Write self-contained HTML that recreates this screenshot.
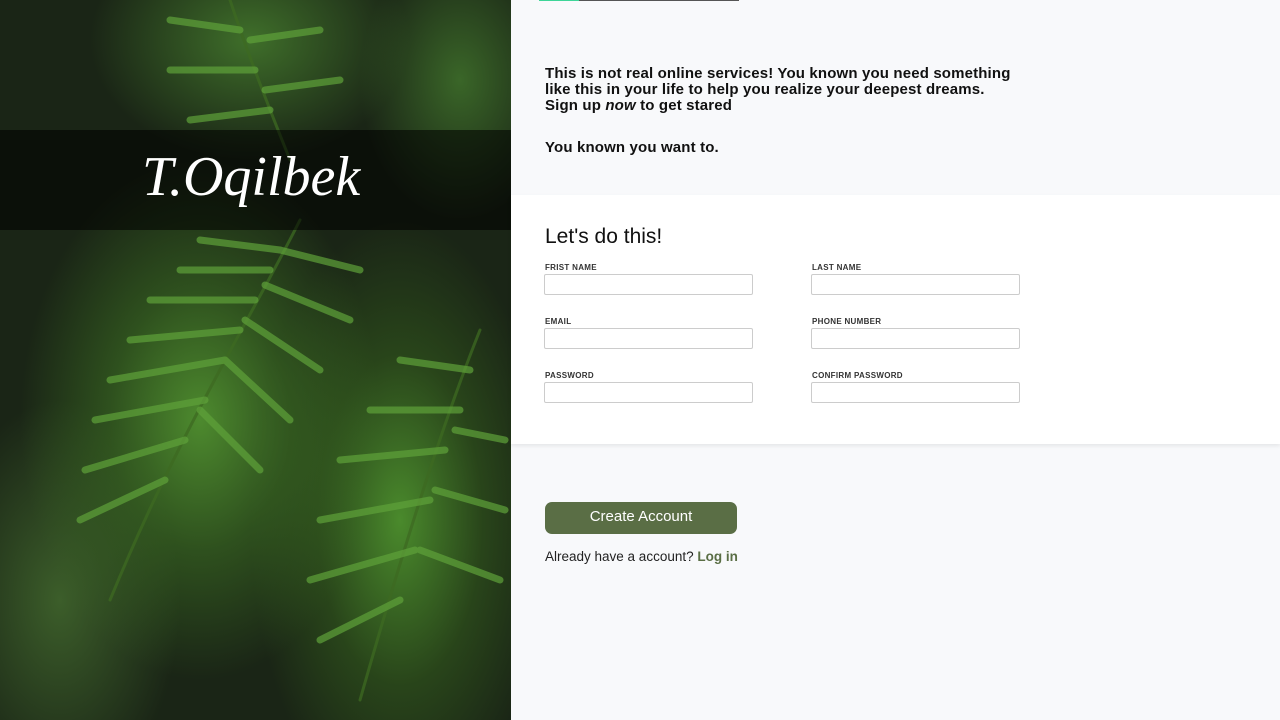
<!DOCTYPE html>
<html><head><meta charset="utf-8"><style>
*{margin:0;padding:0;box-sizing:border-box}
body{width:1280px;height:720px;overflow:hidden;background:#f8f9fb;font-family:"Liberation Sans",sans-serif;position:relative}
#left{position:absolute;left:0;top:0;width:511px;height:720px;overflow:hidden;
background:
radial-gradient(ellipse 180px 260px at 200px 420px,#4d8a2e 0%,rgba(60,110,35,.6) 50%,transparent 100%),
radial-gradient(ellipse 150px 300px at 400px 520px,#4a8a2c 0%,rgba(55,100,30,.5) 55%,transparent 100%),
radial-gradient(ellipse 160px 120px at 250px 40px,#3f6f2a 0%,transparent 100%),
radial-gradient(ellipse 120px 200px at 60px 600px,#3c5e2a 0%,transparent 100%),
radial-gradient(ellipse 100px 140px at 460px 80px,#3a6628 0%,transparent 100%),
#1a2516}
#band{position:absolute;left:0;top:130px;width:511px;height:100px;background:rgba(0,0,0,.55)}
#logo{position:absolute;left:142px;top:145px;font-family:"Liberation Serif",serif;font-style:italic;font-size:56px;color:#fff;letter-spacing:0px}
.t{position:absolute;font-weight:bold;color:#111;font-size:15px;line-height:16px;letter-spacing:.15px}
#bar1{position:absolute;left:539px;top:0;width:40px;height:1px;background:#3ed598}
#bar2{position:absolute;left:579px;top:0;width:160px;height:1px;background:#555}
#card{position:absolute;left:511px;top:195px;width:769px;height:249px;background:#fff;box-shadow:0 2px 4px rgba(0,0,0,.08)}
h2{position:absolute;left:545px;top:225px;font-size:21px;font-weight:normal;color:#111}
.l{position:absolute;font-size:8px;font-weight:bold;color:#333;letter-spacing:.3px}
.i{position:absolute;width:209px;height:21px;border:1px solid #ccc;border-radius:2px;background:#fff}
#btn{position:absolute;left:545px;top:502px;width:192px;height:32px;background:#5a6e45;border-radius:7px;color:#fff;font-size:15px;text-align:center;line-height:30px}
#al{position:absolute;left:545px;top:549px;font-size:13.5px;color:#222}
#al b{color:#5a6e45}
</style></head><body>
<div id="left">
<svg width="511" height="720" style="position:absolute;left:0;top:0" stroke-linecap="round">
<g stroke="#5f9a3a" stroke-width="6" opacity=".75">
<path d="M300 220 C250 320 180 430 110 600" fill="none" stroke="#3d6a22" stroke-width="3"/>
<path d="M480 330 C440 430 400 560 360 700" fill="none" stroke="#3d6a22" stroke-width="3"/>
<path d="M230 0 C250 60 270 110 290 160" fill="none" stroke="#3d6a22" stroke-width="3"/>
</g>
<g stroke="#5fa23a" stroke-width="7" opacity=".7">
<line x1="280" y1="250" x2="200" y2="240"/><line x1="270" y1="270" x2="180" y2="270"/><line x1="255" y1="300" x2="150" y2="300"/><line x1="240" y1="330" x2="130" y2="340"/><line x1="225" y1="360" x2="110" y2="380"/><line x1="205" y1="400" x2="95" y2="420"/><line x1="185" y1="440" x2="85" y2="470"/><line x1="165" y1="480" x2="80" y2="520"/>
<line x1="280" y1="250" x2="360" y2="270"/><line x1="265" y1="285" x2="350" y2="320"/><line x1="245" y1="320" x2="320" y2="370"/><line x1="225" y1="360" x2="290" y2="420"/><line x1="200" y1="410" x2="260" y2="470"/>
<line x1="470" y1="370" x2="400" y2="360"/><line x1="460" y1="410" x2="370" y2="410"/><line x1="445" y1="450" x2="340" y2="460"/><line x1="430" y1="500" x2="320" y2="520"/><line x1="415" y1="550" x2="310" y2="580"/><line x1="400" y1="600" x2="320" y2="640"/><line x1="455" y1="430" x2="505" y2="440"/><line x1="435" y1="490" x2="505" y2="510"/><line x1="420" y1="550" x2="500" y2="580"/>
<line x1="240" y1="30" x2="170" y2="20"/><line x1="255" y1="70" x2="170" y2="70"/><line x1="270" y1="110" x2="190" y2="120"/><line x1="250" y1="40" x2="320" y2="30"/><line x1="265" y1="90" x2="340" y2="80"/>
</g></svg>
<div id="band"></div>
<div id="logo">T.Oqilbek</div>
</div>
<div id="bar1"></div><div id="bar2"></div>
<div class="t" style="left:545px;top:66px">This is not real online services! You known you need something<br>like this in your life to help you realize your deepest dreams.<br>Sign up <i>now</i> to get stared</div>
<div class="t" style="left:545px;top:140px">You known you want to.</div>
<div id="card"></div>
<h2>Let's do this!</h2>
<div class="l" style="left:545px;top:263px">FRIST NAME</div><div class="i" style="left:544px;top:274px"></div>
<div class="l" style="left:812px;top:263px">LAST NAME</div><div class="i" style="left:811px;top:274px"></div>
<div class="l" style="left:545px;top:317px">EMAIL</div><div class="i" style="left:544px;top:328px"></div>
<div class="l" style="left:812px;top:317px">PHONE NUMBER</div><div class="i" style="left:811px;top:328px"></div>
<div class="l" style="left:545px;top:371px">PASSWORD</div><div class="i" style="left:544px;top:382px"></div>
<div class="l" style="left:812px;top:371px">CONFIRM PASSWORD</div><div class="i" style="left:811px;top:382px"></div>
<div id="btn">Create Account</div>
<div id="al">Already have a account? <b>Log in</b></div>
</body></html>
